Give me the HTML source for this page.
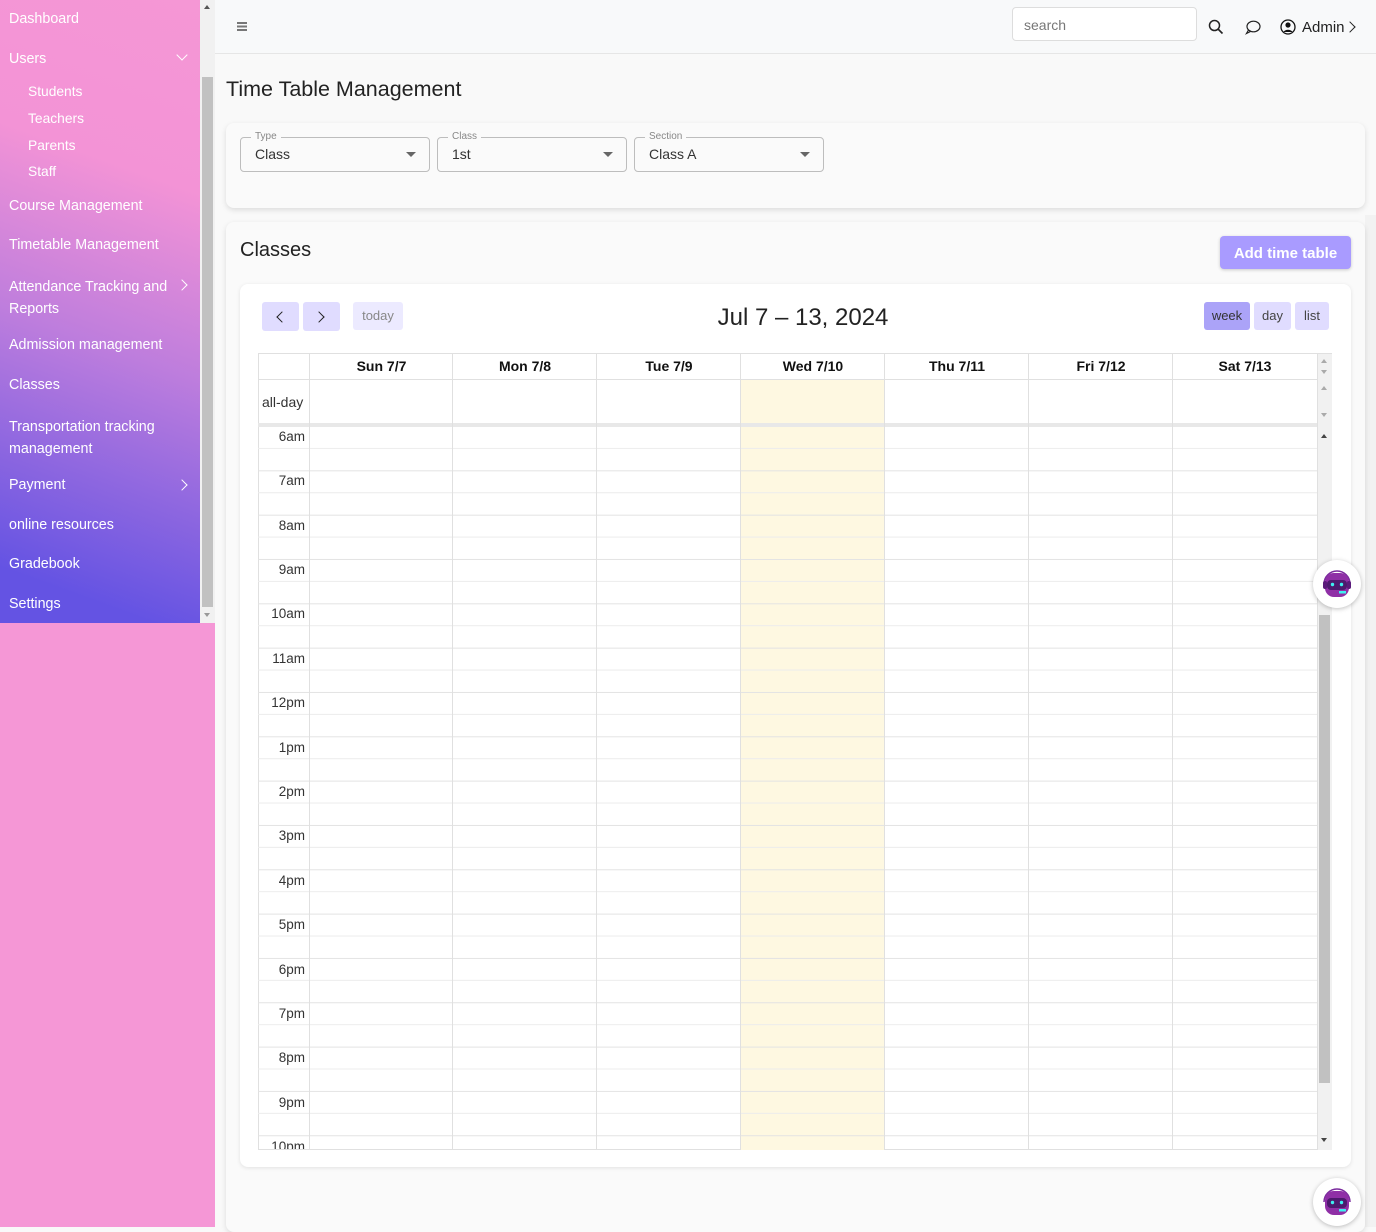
<!DOCTYPE html>
<html><head><meta charset="utf-8"><style>
*{box-sizing:border-box;margin:0;padding:0}
body{width:1376px;height:1227px;overflow:hidden;background:#f9f9f9;font-family:"Liberation Sans",sans-serif;position:relative;color:#212529}
.a{position:absolute}
#sbbg{left:0;top:0;width:215px;height:1227px;background:#f597d6}
#sb{left:0;top:0;width:200px;height:623px;background:linear-gradient(200deg,#f597d5 0%,#f393d6 28%,#bd7ddd 55%,#8c66e0 75%,#6453e3 92%,#6453e3 100%)}
#sb div{position:absolute;color:#fff;font-size:14.3px;left:9px}
#sb .s{left:28px;font-size:13.8px}
#scr{left:200px;top:0;width:15px;height:623px;background:#f1f1f1}
.chev{position:absolute;width:8px;height:8px;border-right:1.3px solid #fff;border-bottom:1.3px solid #fff}
#hdr{left:215px;top:0;width:1161px;height:54px;background:#f8f9fa;border-bottom:1px solid #e6e6e6}
.card{background:#fafafa;border-radius:8px;box-shadow:0 2px 6px rgba(0,0,0,.12)}
.sel{position:absolute;top:137px;height:35px;width:190px;border:1px solid #bdbdbd;border-radius:4px;font-size:14px;padding:8px 14px;color:#333}
.sel span{position:absolute;top:-7px;left:10px;font-size:10px;color:#888;background:#fafafa;padding:0 4px}
.sel i{position:absolute;right:13px;top:14px;border-left:5px solid transparent;border-right:5px solid transparent;border-top:5px solid #666}
.btn{position:absolute;background:#e0dcff;border-radius:3px;font-size:13px;color:#444;text-align:center}
.dh{position:absolute;top:353px;height:27px;font-weight:bold;font-size:14px;text-align:center;line-height:27px;color:#111}
.vl{position:absolute;top:353px;width:1px;height:797px;background:#e0e0e0}
.lb{position:absolute;left:258px;width:47px;text-align:right;font-size:13.5px;color:#333}
.bot{position:absolute;width:48px;height:48px;border-radius:50%;background:#fff;box-shadow:0 1px 5px rgba(0,0,0,.25)}
</style></head><body>
<div class="a" id="sbbg"></div>
<div class="a" id="sb">
<div style="top:11px">Dashboard</div>
<div style="top:51px">Users</div><span class="chev" style="left:178px;top:51px;transform:rotate(45deg)"></span>
<div class="s" style="top:84px">Students</div>
<div class="s" style="top:111px">Teachers</div>
<div class="s" style="top:138px">Parents</div>
<div class="s" style="top:164px">Staff</div>
<div style="top:198px">Course Management</div>
<div style="top:237px">Timetable Management</div>
<div style="top:276px;line-height:22px;width:168px">Attendance Tracking and Reports</div><span class="chev" style="left:178px;top:281px;transform:rotate(-45deg)"></span>
<div style="top:337px">Admission management</div>
<div style="top:377px">Classes</div>
<div style="top:416px;line-height:22px;width:165px">Transportation tracking management</div>
<div style="top:477px">Payment</div><span class="chev" style="left:178px;top:481px;transform:rotate(-45deg)"></span>
<div style="top:517px">online resources</div>
<div style="top:556px">Gradebook</div>
<div style="top:596px">Settings</div>
</div>
<div class="a" id="scr"><div class="a" style="left:2px;top:77px;width:11px;height:530px;background:#c1c1c1"></div>
<div class="a" style="left:4px;top:5px;border-left:3.5px solid transparent;border-right:3.5px solid transparent;border-bottom:4px solid #555"></div>
<div class="a" style="left:4px;top:613px;border-left:3.5px solid transparent;border-right:3.5px solid transparent;border-top:4px solid #999"></div></div>
<div class="a" id="hdr">
<div class="a" style="left:22px;top:22px;width:10px;height:1.5px;background:#777;box-shadow:0 3.5px 0 #777,0 7px 0 #777"></div>
<div class="a" style="left:797px;top:7px;width:185px;height:34px;background:#fff;border:1px solid #ddd;border-radius:4px;font-size:14px;color:#777;padding:9px 11px">search</div>
<svg class="a" style="left:993px;top:19px" width="16" height="16" viewBox="0 0 16 16"><circle cx="6.5" cy="6.5" r="5" fill="none" stroke="#222" stroke-width="1.5"/><path d="M10 10l4.5 4.5" stroke="#222" stroke-width="1.6"/></svg>
<svg class="a" style="left:1030px;top:20px" width="16" height="15" viewBox="0 0 16 15"><ellipse cx="8.5" cy="6.5" rx="6.5" ry="5.3" fill="none" stroke="#222" stroke-width="1.2"/><path d="M3.5 10l-2 3.5 4-2" fill="none" stroke="#222" stroke-width="1.2"/></svg>
<svg class="a" style="left:1065px;top:19px" width="16" height="16" viewBox="0 0 16 16"><circle cx="8" cy="8" r="7" fill="none" stroke="#111" stroke-width="1.3"/><circle cx="8" cy="6" r="2.6" fill="#111"/><path d="M3.5 13c1.5-3 7.5-3 9 0" fill="#111"/></svg>
<div class="a" style="left:1087px;top:19px;font-size:15px;color:#222">Admin</div>
<div class="chev" style="left:1131px;top:23px;border-color:#222;transform:rotate(-45deg)"></div>
</div>
<div class="a" style="left:226px;top:77px;font-size:21.5px;color:#222">Time Table Management</div>
<div class="a card" style="left:226px;top:123px;width:1139px;height:85px"></div>
<div class="sel" style="left:240px"><span>Type</span>Class<i></i></div>
<div class="sel" style="left:437px"><span>Class</span>1st<i></i></div>
<div class="sel" style="left:634px"><span>Section</span>Class A<i></i></div>
<div class="a" style="left:1365px;top:215px;width:11px;height:1012px;background:#f2f2f2"></div>
<div class="a card" style="left:226px;top:222px;width:1139px;height:1010px"></div>
<div class="a" style="left:240px;top:239px;font-size:20px;color:#222">Classes</div>
<div class="a" style="left:1220px;top:236px;width:131px;height:33px;background:#a99bff;border-radius:4px;color:#fff;font-weight:bold;font-size:15px;text-align:center;line-height:35px;box-shadow:0 1px 3px rgba(0,0,0,.2)">Add time table</div>
<div class="a" style="left:240px;top:284px;width:1111px;height:883px;background:#fff;border-radius:8px;box-shadow:0 1px 4px rgba(0,0,0,.1)"></div>
<div class="btn" style="left:262px;top:302px;width:37px;height:29px"></div>
<div class="btn" style="left:303px;top:302px;width:37px;height:29px"></div>
<div class="chev" style="left:278px;top:313px;border-color:#222;transform:rotate(135deg)"></div>
<div class="chev" style="left:315px;top:313px;border-color:#222;transform:rotate(-45deg)"></div>
<div class="btn" style="left:353px;top:302px;width:50px;height:28px;line-height:28px;background:#eceaff;color:#888">today</div>
<div class="a" style="left:603px;top:304px;width:400px;text-align:center;font-size:24px;color:#222">Jul 7 – 13, 2024</div>
<div class="btn" style="left:1204px;top:302px;width:46px;height:28px;line-height:28px;background:#aba3f8;color:#333">week</div>
<div class="btn" style="left:1254px;top:302px;width:37px;height:28px;line-height:28px">day</div>
<div class="btn" style="left:1295px;top:302px;width:34px;height:28px;line-height:28px">list</div>
<!-- grid -->
<div class="a" style="left:258px;top:353px;width:1074px;height:797px;border:1px solid #e0e0e0"></div>
<div class="a" style="left:741px;top:380px;width:144px;height:770px;background:#fef8e1"></div>
<div class="a" style="left:258px;top:426px;width:1059px;height:724px;background-image:linear-gradient(to bottom,#e3e3e3 0,#e3e3e3 1px,transparent 1px,transparent 22px,#ececec 22px,#ececec 23px,transparent 23px);background-size:100% 44.33px;background-repeat:repeat-y"></div>
<div class="a" style="left:258px;top:379px;width:1059px;height:1px;background:#e0e0e0"></div>
<div class="a" style="left:258px;top:423px;width:1074px;height:4px;background:#e8e8e8"></div>
<div class="a" style="left:1317px;top:354px;width:15px;height:796px;background:#f1f1f1;border-left:1px solid #e0e0e0"></div>
<div class="a" style="left:1319px;top:615px;width:11px;height:468px;background:#c1c1c1"></div>
<div class="vl" style="left:309px"></div><div class="vl" style="left:452px"></div><div class="vl" style="left:596px"></div><div class="vl" style="left:740px"></div><div class="vl" style="left:884px"></div><div class="vl" style="left:1028px"></div><div class="vl" style="left:1172px"></div>
<div class="dh" style="left:310px;width:143px">Sun 7/7</div><div class="dh" style="left:453px;width:144px">Mon 7/8</div><div class="dh" style="left:597px;width:144px">Tue 7/9</div><div class="dh" style="left:741px;width:144px">Wed 7/10</div><div class="dh" style="left:885px;width:144px">Thu 7/11</div><div class="dh" style="left:1029px;width:144px">Fri 7/12</div><div class="dh" style="left:1173px;width:144px">Sat 7/13</div>
<div class="a" style="left:262px;top:394px;font-size:14px;color:#333">all-day</div>
<div class="lb" style="top:429px">6am</div><div class="lb" style="top:473px">7am</div><div class="lb" style="top:518px">8am</div><div class="lb" style="top:562px">9am</div><div class="lb" style="top:606px">10am</div><div class="lb" style="top:651px">11am</div><div class="lb" style="top:695px">12pm</div><div class="lb" style="top:740px">1pm</div><div class="lb" style="top:784px">2pm</div><div class="lb" style="top:828px">3pm</div><div class="lb" style="top:873px">4pm</div><div class="lb" style="top:917px">5pm</div><div class="lb" style="top:962px">6pm</div><div class="lb" style="top:1006px">7pm</div><div class="lb" style="top:1050px">8pm</div><div class="lb" style="top:1095px">9pm</div>
<div class="a" style="left:258px;top:1138px;width:47px;height:11px;overflow:hidden"><div class="lb" style="left:0;top:1px">10pm</div></div>
<div class="a" style="left:1321px;top:434px;border-left:3.5px solid transparent;border-right:3.5px solid transparent;border-bottom:4px solid #444"></div>
<div class="a" style="left:1321px;top:1138px;border-left:3.5px solid transparent;border-right:3.5px solid transparent;border-top:4px solid #444"></div>
<div class="a" style="left:1321px;top:359px;border-left:3.5px solid transparent;border-right:3.5px solid transparent;border-bottom:4px solid #aaa"></div>
<div class="a" style="left:1321px;top:370px;border-left:3.5px solid transparent;border-right:3.5px solid transparent;border-top:4px solid #aaa"></div>
<div class="a" style="left:1321px;top:386px;border-left:3.5px solid transparent;border-right:3.5px solid transparent;border-bottom:4px solid #aaa"></div>
<div class="a" style="left:1321px;top:413px;border-left:3.5px solid transparent;border-right:3.5px solid transparent;border-top:4px solid #aaa"></div>
<!-- bots -->
<div class="bot" style="left:1313px;top:560px"><svg width="48" height="48" viewBox="0 0 48 48"><path d="M11 24a13 13 0 0 1 26 0" fill="none" stroke="#7b2b9e" stroke-width="1.5"/><rect x="12" y="13" width="24" height="24" rx="9" fill="#8f2fa6"/><rect x="10" y="21" width="4" height="8" rx="2" fill="#5a1a7a"/><rect x="34" y="21" width="4" height="8" rx="2" fill="#5a1a7a"/><rect x="14" y="20" width="20" height="10" rx="4" fill="#4d1a6e"/><circle cx="19.5" cy="24.5" r="1.7" fill="#3ef0f0"/><circle cx="28.5" cy="24.5" r="1.7" fill="#3ef0f0"/><rect x="26" y="31" width="7" height="2.5" fill="#3ef0f0"/></svg></div>
<div class="bot" style="left:1313px;top:1178px"><svg width="48" height="48" viewBox="0 0 48 48"><path d="M11 24a13 13 0 0 1 26 0" fill="none" stroke="#7b2b9e" stroke-width="1.5"/><rect x="12" y="13" width="24" height="24" rx="9" fill="#8f2fa6"/><rect x="14" y="20" width="20" height="10" rx="4" fill="#4d1a6e"/><circle cx="19.5" cy="24.5" r="1.7" fill="#3ef0f0"/><circle cx="28.5" cy="24.5" r="1.7" fill="#3ef0f0"/><rect x="26" y="31" width="7" height="2.5" fill="#3ef0f0"/></svg></div>
</body></html>
